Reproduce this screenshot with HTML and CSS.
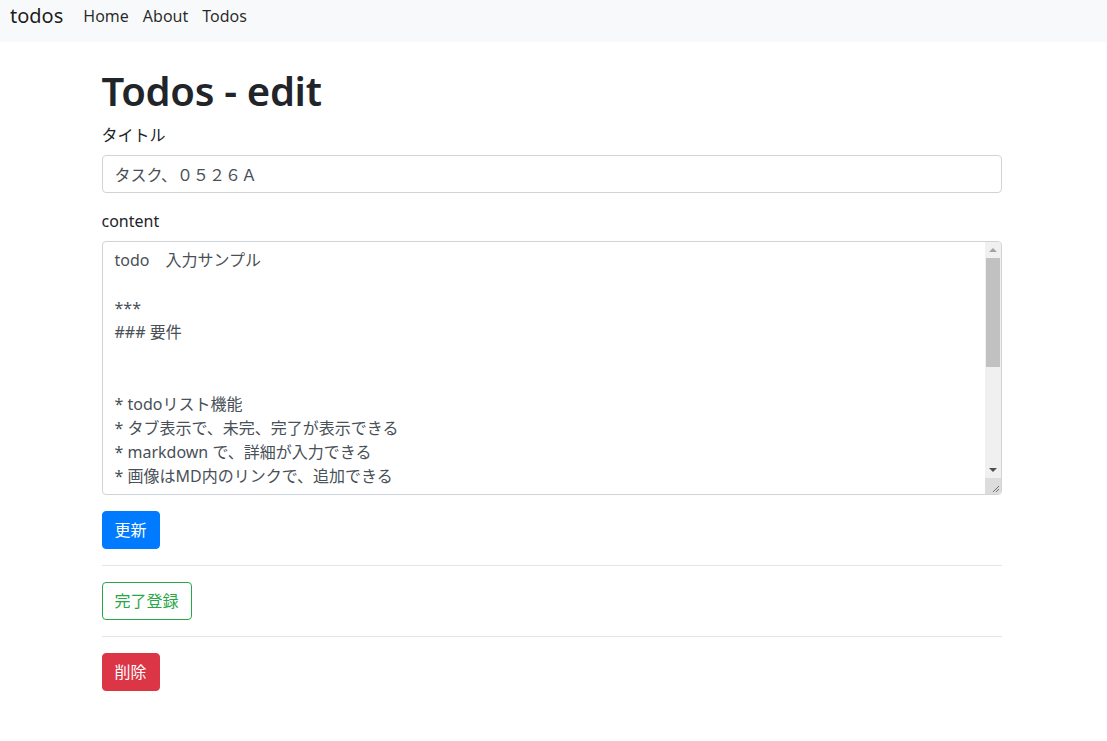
FILE: index.html
```html
<!DOCTYPE html>
<html lang="ja">
<head>
<meta charset="utf-8">
<title>todos</title>
<link rel="stylesheet" href="styles.css">
</head>
<body>
<nav class="navbar">
  <a class="brand" href="#">todos</a>
  <ul class="nav">
    <li><a href="#">Home</a></li>
    <li><a href="#">About</a></li>
    <li><a href="#">Todos</a></li>
  </ul>
</nav>
<main class="container">
  <h1 class="title">Todos - edit</h1>
  <div class="form-group">
    <label class="label" for="title">タイトル</label>
    <input class="form-control" id="title" type="text" value="タスク、０５２６Ａ">
  </div>
  <div class="form-group">
    <label class="label" for="content">content</label>
    <div class="textarea-wrap">
      <textarea class="form-control textarea" id="content">todo　入力サンプル

***
### 要件


* todoリスト機能
* タブ表示で、未完、完了が表示できる
* markdown で、詳細が入力できる
* 画像はMD内のリンクで、追加できる


***
### 画面


* 一覧
* 新規登録
* 編集
</textarea>
      <div class="scrollbar" aria-hidden="true">
        <div class="sb-btn"><span class="arrow-up"></span></div>
        <div class="sb-track"><div class="sb-thumb"></div></div>
        <div class="sb-btn"><span class="arrow-down"></span></div>
        <div class="sb-corner">
          <svg width="16" height="16" viewBox="0 0 16 16">
            <path d="M14 8 L8 14 M14 11 L11 14" stroke="#6b6b6b" stroke-width="1" fill="none"/>
          </svg>
        </div>
      </div>
    </div>
  </div>
  <button class="btn btn-primary" type="button">更新</button>
  <hr class="divider">
  <button class="btn btn-outline-success" type="button">完了登録</button>
  <hr class="divider">
  <button class="btn btn-danger" type="button">削除</button>
</main>
</body>
</html>
```

FILE: styles.css
```css
* { box-sizing: border-box; }

body {
  margin: 0;
  font-family: "Noto Sans", "Noto Sans CJK JP", sans-serif;
  font-size: 16px;
  line-height: 1.5;
  color: #212529;
  background: #fff;
}

.navbar {
  height: 42px;
  background: #f8f9fa;
  display: flex;
  align-items: flex-start;
  padding: 1px 10px 0;
}

.brand {
  font-size: 20px;
  line-height: 30px;
  color: rgba(0, 0, 0, 0.9);
  text-decoration: none;
  margin-right: 13px;
}

.nav {
  list-style: none;
  margin: 0;
  padding: 3px 0 0;
  display: flex;
}

.nav a {
  display: block;
  padding: 0 7px;
  line-height: 24px;
  color: rgba(0, 0, 0, 0.85);
  text-decoration: none;
}

.container {
  max-width: 932px;
  margin: 0 auto;
  padding: 25px 18px 0 14px;
}

.title {
  margin: 0 0 8px;
  font-size: 40px;
  line-height: 48px;
  font-weight: 600;
  letter-spacing: -0.3px;
}

.form-group { margin-bottom: 16px; }

.label {
  display: inline-block;
  margin-bottom: 8px;
  line-height: 24px;
}

.form-control {
  display: block;
  width: 100%;
  height: 38px;
  padding: 6px 12px;
  font: inherit;
  font-size: 16px;
  line-height: 24px;
  color: #495057;
  background: #fff;
  border: 1px solid #ced4da;
  border-radius: 4px;
}

.textarea-wrap { position: relative; }

.textarea {
  height: 254px;
  resize: none;
  overflow: hidden;
  padding-right: 30px;
}

.scrollbar {
  position: absolute;
  top: 1px;
  right: 1px;
  bottom: 1px;
  width: 16px;
  background: #f0f0f0;
  display: flex;
  flex-direction: column;
  border-radius: 0 3px 3px 0;
  overflow: hidden;
}

.sb-btn {
  height: 16px;
  flex: none;
  display: flex;
  align-items: center;
  justify-content: center;
}

.arrow-up {
  width: 0;
  height: 0;
  border-left: 4px solid transparent;
  border-right: 4px solid transparent;
  border-bottom: 4px solid #a3a3a3;
}

.arrow-down {
  width: 0;
  height: 0;
  border-left: 4px solid transparent;
  border-right: 4px solid transparent;
  border-top: 4px solid #505050;
}

.sb-track {
  flex: 1;
  padding: 0 1px;
}

.sb-thumb {
  height: 109px;
  background: #c1c1c1;
}

.sb-corner {
  height: 16px;
  flex: none;
  background: #dcdcdc;
}

.sb-corner svg { display: block; }

.btn {
  display: inline-block;
  font: inherit;
  font-size: 16px;
  line-height: 24px;
  padding: 6px 12px;
  border: 1px solid transparent;
  border-radius: 4px;
  cursor: pointer;
  vertical-align: top;
}

.btn-primary { background: #007bff; border-color: #007bff; color: #fff; }
.btn-outline-success { background: #fff; border-color: #28a745; color: #28a745; }
.btn-danger { background: #dc3545; border-color: #dc3545; color: #fff; }

.divider {
  margin: 16px 0;
  border: 0;
  border-top: 1px solid rgba(0, 0, 0, 0.1);
}
```
